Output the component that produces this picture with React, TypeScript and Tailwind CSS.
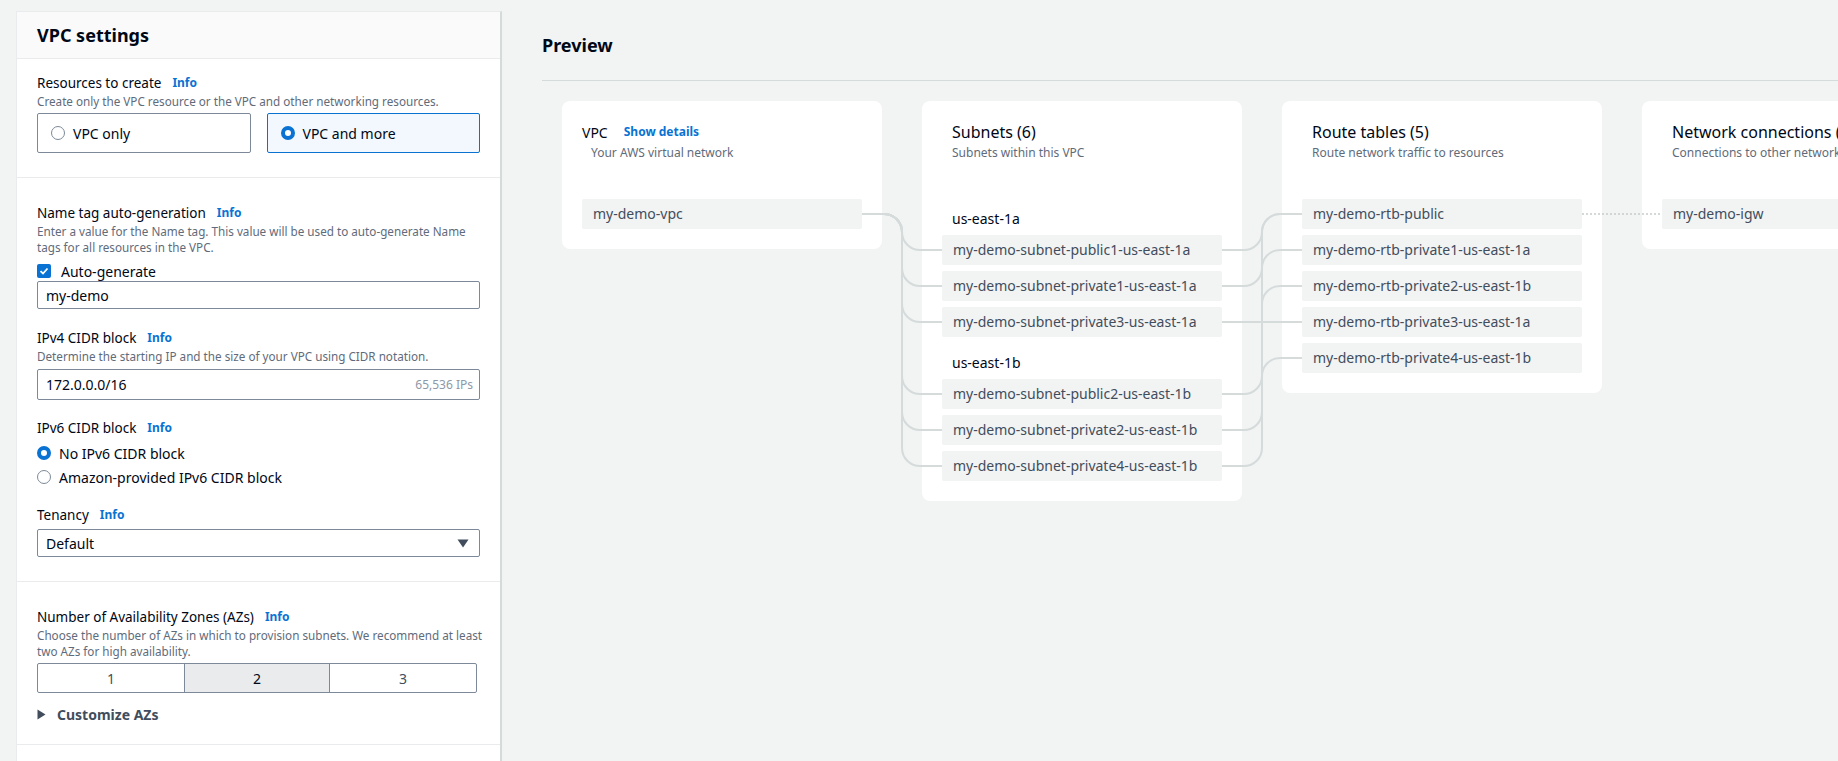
import React from 'react';

const subnetsA = [
  'my-demo-subnet-public1-us-east-1a',
  'my-demo-subnet-private1-us-east-1a',
  'my-demo-subnet-private3-us-east-1a',
];
const subnetsB = [
  'my-demo-subnet-public2-us-east-1b',
  'my-demo-subnet-private2-us-east-1b',
  'my-demo-subnet-private4-us-east-1b',
];
const routeTables = [
  'my-demo-rtb-public',
  'my-demo-rtb-private1-us-east-1a',
  'my-demo-rtb-private2-us-east-1b',
  'my-demo-rtb-private3-us-east-1a',
  'my-demo-rtb-private4-us-east-1b',
];

// y centres of the rows, relative to the top of the cards row
const subnetY = [149, 185, 221, 293, 329, 365];
const routeY = [113, 149, 185, 221, 257];
// which route table each subnet is attached to
const subnetToRoute = [0, 1, 3, 0, 2, 4];

function connPath(x1: number, y1: number, x2: number, y2: number, xm: number, r = 18) {
  if (y1 === y2) return `M${x1} ${y1}H${x2}`;
  const down = y2 > y1;
  const d = down ? 1 : -1;
  const s1 = down ? 1 : 0;
  const s2 = down ? 0 : 1;
  return `M${x1} ${y1}H${xm - r}A${r} ${r} 0 0 ${s1} ${xm} ${y1 + d * r}V${y2 - d * r}A${r} ${r} 0 0 ${s2} ${xm + r} ${y2}H${x2}`;
}

function Info() {
  return <span className="ml-[11px] text-[12px] font-bold text-[#0972d3]">Info</span>;
}

function Label({ children }: { children: React.ReactNode }) {
  return (
    <div className="flex items-center text-[13.5px] leading-[20px] text-[#000716]">
      <span>{children}</span>
      <Info />
    </div>
  );
}

function Desc({ lines }: { lines: string[] }) {
  return (
    <div className="text-[11.7px] leading-[16px] text-[#5f6b7a]">
      {lines.map((l) => (
        <div key={l} className="whitespace-nowrap">{l}</div>
      ))}
    </div>
  );
}

function Radio({ checked }: { checked?: boolean }) {
  return checked ? (
    <span className="w-[14px] h-[14px] rounded-full border-[4px] border-[#0972d3] bg-white shrink-0" />
  ) : (
    <span className="w-[14px] h-[14px] rounded-full border-[1.5px] border-[#7d8998] bg-white shrink-0" />
  );
}

function Item({ children }: { children: React.ReactNode }) {
  return (
    <div className="h-[30px] w-[280px] bg-[#f2f3f3] rounded-[2px] pl-[11px] text-[14px] leading-[30px] text-[#414d5c] whitespace-nowrap">
      {children}
    </div>
  );
}

function CardHead({ title, desc }: { title: string; desc: string }) {
  return (
    <div className="ml-[10px]">
      <div className="h-[22px] text-[16px] leading-[22px] text-[#000716] whitespace-nowrap">{title}</div>
      <div className="mt-[2px] text-[12px] leading-[16px] text-[#5f6b7a] whitespace-nowrap">{desc}</div>
    </div>
  );
}

export default function App() {
  const leftConns = subnetY.map((y) => connPath(300, 113, 380, y, 340));
  const rightConns = subnetY.map((y, i) => connPath(660, y, 740, routeY[subnetToRoute[i]], 700));

  return (
    <div className="w-[1838px] h-[761px] overflow-hidden bg-[#f2f3f3] flex font-['Noto_Sans','Open_Sans',sans-serif]">
      {/* left: settings form */}
      <div className="ml-[16px] mt-[11px] w-[486px] shrink-0 bg-white border-l border-t border-[#e9ebed] border-r-2 border-r-[#d5dbdb] self-start">
        <div className="h-[47px] bg-[#fafafa] border-b border-[#e9ebed] px-5 flex items-center">
          <h2 className="text-[18px] font-bold text-[#000716] leading-[24px]">VPC settings</h2>
        </div>

        <div className="px-5 pt-[14px] pb-[24px] border-b border-[#e9ebed]">
          <Label>Resources to create</Label>
          <Desc lines={['Create only the VPC resource or the VPC and other networking resources.']} />
          <div className="mt-[4px] flex gap-4">
            <div className="flex-1 h-[40px] rounded-[2px] border border-[#7d8998] flex items-center pl-[13px] gap-2 text-[14px] text-[#000716]">
              <Radio />
              <span>VPC only</span>
            </div>
            <div className="flex-1 h-[40px] rounded-[2px] border border-[#0972d3] bg-[#f2f8fd] flex items-center pl-[13px] gap-2 text-[14px] text-[#000716]">
              <Radio checked />
              <span>VPC and more</span>
            </div>
          </div>
        </div>

        <div className="px-5 pt-[25px] pb-[24px] border-b border-[#e9ebed]">
          <Label>Name tag auto-generation</Label>
          <Desc
            lines={[
              'Enter a value for the Name tag. This value will be used to auto-generate Name',
              'tags for all resources in the VPC.',
            ]}
          />
          <div className="mt-[6px] h-[20px] flex items-center gap-[10px] text-[14px] text-[#000716]">
            <span className="w-[14px] h-[14px] rounded-[2px] bg-[#0972d3] flex items-center justify-center">
              <svg width="10" height="10" viewBox="0 0 10 10">
                <path d="M1.5 5.2 L4 7.5 L8.5 2.5" fill="none" stroke="white" strokeWidth="1.8" />
              </svg>
            </span>
            <span>Auto-generate</span>
          </div>
          <div className="h-[28px] rounded-[2px] border border-[#7d8998] flex items-center pl-[8px] text-[14px] text-[#000716]">
            my-demo
          </div>

          <div className="mt-[19px]">
            <Label>IPv4 CIDR block</Label>
          </div>
          <Desc lines={['Determine the starting IP and the size of your VPC using CIDR notation.']} />
          <div className="mt-[5px] h-[31px] rounded-[2px] border border-[#7d8998] flex items-center justify-between pl-[8px] pr-[6px] text-[14px] text-[#000716]">
            <span>172.0.0.0/16</span>
            <span className="text-[12px] text-[#8d99a8]">65,536 IPs</span>
          </div>

          <div className="mt-[18px]">
            <Label>IPv6 CIDR block</Label>
          </div>
          <div className="mt-[5px] h-[20px] flex items-center gap-2 text-[14px] text-[#000716]">
            <Radio checked />
            <span>No IPv6 CIDR block</span>
          </div>
          <div className="mt-[4px] h-[20px] flex items-center gap-2 text-[14px] text-[#000716]">
            <Radio />
            <span>Amazon-provided IPv6 CIDR block</span>
          </div>

          <div className="mt-[18px]">
            <Label>Tenancy</Label>
          </div>
          <div className="mt-[4px] h-[28px] rounded-[2px] border border-[#7d8998] flex items-center justify-between pl-[8px] pr-[10px] text-[14px] text-[#000716]">
            <span>Default</span>
            <svg width="12" height="9" viewBox="0 0 12 9">
              <path d="M0.5 0.5 H11.5 L6 8.5 Z" fill="#414d5c" />
            </svg>
          </div>
        </div>

        <div className="px-5 pt-[25px] pb-[20px] border-b border-[#e9ebed]">
          <Label>Number of Availability Zones (AZs)</Label>
          <Desc
            lines={[
              'Choose the number of AZs in which to provision subnets. We recommend at least',
              'two AZs for high availability.',
            ]}
          />
          <div className="mt-[4px] mr-[3px] h-[30px] rounded-[2px] border border-[#7d8998] grid grid-cols-3 text-[14px]">
            <div className="flex items-center justify-center text-[#414d5c]">1</div>
            <div className="flex items-center justify-center bg-[#e9ebed] border-x border-[#7d8998] text-[#000716]">2</div>
            <div className="flex items-center justify-center text-[#414d5c]">3</div>
          </div>
          <div className="mt-[11px] h-[20px] flex items-center gap-[11px] text-[14px] font-bold text-[#414d5c]">
            <svg width="9" height="11" viewBox="0 0 9 11">
              <path d="M0.5 0.5 V10.5 L8.5 5.5 Z" fill="#414d5c" />
            </svg>
            <span>Customize AZs</span>
          </div>
        </div>
        <div className="h-[40px]" />
      </div>

      {/* right: preview */}
      <div className="flex-1 min-w-0 pl-[40px] pt-[33px] overflow-hidden">
        <h2 className="text-[18px] font-bold leading-[24px] text-[#000716]">Preview</h2>
        <div className="mt-[23px] border-t border-[#d5dbdb]" />

        <div className="relative mt-[20px] ml-[20px] flex items-start gap-10">
          {/* VPC */}
          <div className="w-[320px] shrink-0 bg-white rounded-[8px] px-5 pt-5 pb-5">
            <div className="h-[22px] flex items-center text-[14px] text-[#000716]">
              <span>VPC</span>
              <span className="ml-[16px] text-[12px] font-bold text-[#0972d3]">Show details</span>
            </div>
            <div className="mt-[2px] ml-[9px] text-[12px] leading-[16px] text-[#5f6b7a]">Your AWS virtual network</div>
            <div className="mt-[38px]">
              <Item>my-demo-vpc</Item>
            </div>
          </div>

          {/* Subnets */}
          <div className="w-[320px] shrink-0 bg-white rounded-[8px] px-5 pt-5 pb-5">
            <CardHead title="Subnets (6)" desc="Subnets within this VPC" />
            <div className="mt-[48px] ml-[10px] h-[20px] text-[14px] leading-[20px] text-[#000716]">us-east-1a</div>
            <div className="mt-[6px] flex flex-col gap-[6px]">
              {subnetsA.map((s) => (
                <Item key={s}>{s}</Item>
              ))}
            </div>
            <div className="mt-[16px] ml-[10px] h-[20px] text-[14px] leading-[20px] text-[#000716]">us-east-1b</div>
            <div className="mt-[6px] flex flex-col gap-[6px]">
              {subnetsB.map((s) => (
                <Item key={s}>{s}</Item>
              ))}
            </div>
          </div>

          {/* Route tables */}
          <div className="w-[320px] shrink-0 bg-white rounded-[8px] px-5 pt-5 pb-5">
            <CardHead title="Route tables (5)" desc="Route network traffic to resources" />
            <div className="mt-[38px] flex flex-col gap-[6px]">
              {routeTables.map((r) => (
                <Item key={r}>{r}</Item>
              ))}
            </div>
          </div>

          {/* Network connections */}
          <div className="w-[320px] shrink-0 bg-white rounded-[8px] px-5 pt-5 pb-5">
            <CardHead title="Network connections (1)" desc="Connections to other networks" />
            <div className="mt-[38px]">
              <Item>my-demo-igw</Item>
            </div>
          </div>

          {/* connectors */}
          <svg className="absolute left-0 top-0 pointer-events-none" width="1400" height="420">
            {leftConns.concat(rightConns).map((d, i) => (
              <path key={i} d={d} fill="none" stroke="#d5dbdb" strokeWidth="2" />
            ))}
            <path d="M1020 113H1100" fill="none" stroke="#c6cccc" strokeWidth="1.5" strokeDasharray="2 2" />
          </svg>
        </div>
      </div>
    </div>
  );
}
